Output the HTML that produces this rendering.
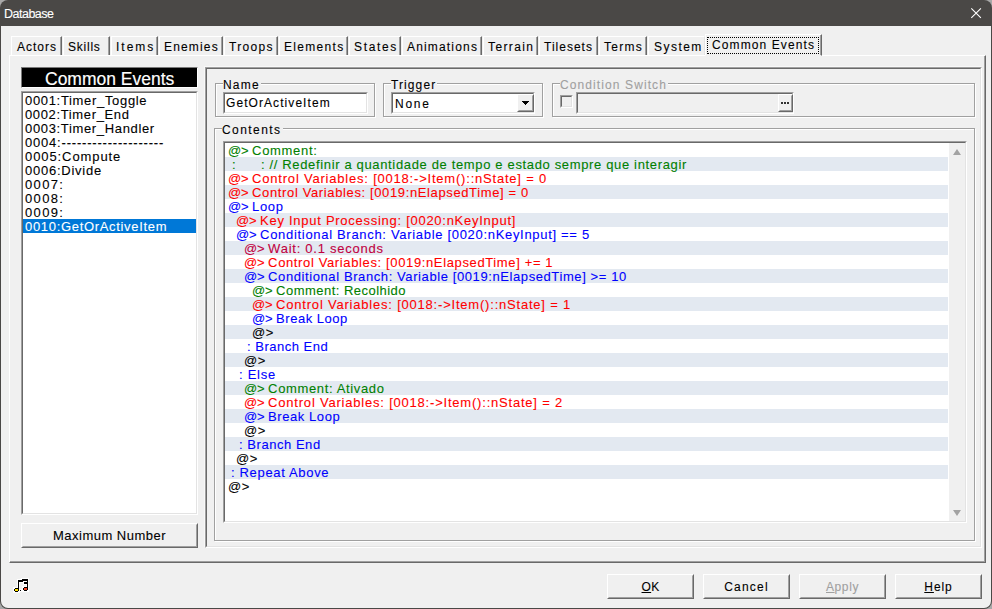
<!DOCTYPE html>
<html><head><meta charset="utf-8">
<style>
*{margin:0;padding:0;box-sizing:border-box}
html,body{width:992px;height:609px;overflow:hidden;background:#a8a8a8}
body{position:relative;font-family:"Liberation Sans",sans-serif;font-size:12px;color:#000;-webkit-text-stroke:0.1px currentColor}
.a{position:absolute}
.t{position:absolute;white-space:pre;line-height:14px;letter-spacing:0.8px}
/* etched group box */
.grp{position:absolute;border:1px solid #a0a0a0;box-shadow:1px 1px 0 #fff, inset 1px 1px 0 #fff}
/* sunken client edge */
.sunk{position:absolute;border-top:1px solid #a0a0a0;border-left:1px solid #a0a0a0;border-right:1px solid #fff;border-bottom:1px solid #fff}
.sunk>.in{position:absolute;left:0;top:0;right:0;bottom:0;border-top:1px solid #696969;border-left:1px solid #696969;border-right:1px solid #e3e3e3;border-bottom:1px solid #e3e3e3}
.btn{position:absolute;background:#f0f0f0;border-top:1px solid #fff;border-left:1px solid #fff;border-right:1px solid #696969;border-bottom:1px solid #696969}
.btn>.in{position:absolute;left:0;top:0;right:0;bottom:0;border-right:1px solid #a0a0a0;border-bottom:1px solid #a0a0a0;border-top:1px solid #f0f0f0;border-left:1px solid #f0f0f0}
.btn .lbl{position:absolute;left:0;right:0;text-align:center;white-space:pre}
.tab{position:absolute;top:36px;height:19px;border-top:1px solid #fff;border-left:1px solid #fff;border-right:1px solid #696969;background:#f0f0f0}
.tab:after{content:"";position:absolute;right:0;top:0;bottom:0;width:1px;background:#a0a0a0}
.tab.nt:after{display:none}
.tab span{position:absolute;top:3px;white-space:pre;letter-spacing:1.2px}
.ct{letter-spacing:0.65px;font-size:13px}
.at{letter-spacing:-0.1px}
.lt{font-size:13px}
.row{position:absolute;left:0;width:723px;height:14px}
.row.b{background:#e3e9f1}
.g{color:#008000}.r{color:#ff0000}.bl{color:#0000ff}.dr{color:#c00040}.k{color:#000}
</style></head><body>
<!-- title bar -->
<div class="a" style="left:0;top:0;width:992px;height:609px;background:#4a4846;border-radius:8px"></div>
<div class="a" style="left:1px;top:26px;width:990px;height:582px;background:#f0f0f0;border-radius:0 0 7px 7px"></div>
<div class="t" style="left:4px;top:7px;color:#fff;font-size:12.5px;letter-spacing:-0.5px">Database</div>
<div class="a" style="left:970px;top:7px;width:13px;height:13px">
<svg width="13" height="13" viewBox="0 0 13 13"><path d="M1.3 1.3L10.9 10.9M10.9 1.3L1.3 10.9" stroke="#fff" stroke-width="1.1"/></svg></div>

<!-- tab panel -->
<div class="a" style="left:9px;top:55px;width:977px;height:508px;border-top:1px solid #fff;border-left:1px solid #fff;border-right:1px solid #696969;border-bottom:1px solid #696969"></div>
<div class="a" style="left:984px;top:56px;width:1px;height:506px;background:#a0a0a0"></div>
<div class="a" style="left:10px;top:561px;width:975px;height:1px;background:#a0a0a0"></div>

<!-- tabs -->
<div class="tab" style="left:11px;width:51px"><span style="left:5px;letter-spacing:1.00px">Actors</span></div>
<div class="tab" style="left:63px;width:47px"><span style="left:4px;letter-spacing:0.76px">Skills</span></div>
<div class="tab" style="left:111px;width:47px"><span style="left:4px;letter-spacing:2.00px">Items</span></div>
<div class="tab" style="left:159px;width:64px"><span style="left:4px;letter-spacing:1.17px">Enemies</span></div>
<div class="tab" style="left:224px;width:54px"><span style="left:4px;letter-spacing:1.34px">Troops</span></div>
<div class="tab" style="left:279px;width:69px"><span style="left:4px;letter-spacing:1.31px">Elements</span></div>
<div class="tab" style="left:349px;width:52px"><span style="left:4px;letter-spacing:1.66px">States</span></div>
<div class="tab" style="left:402px;width:80px"><span style="left:4px;letter-spacing:1.17px">Animations</span></div>
<div class="tab" style="left:483px;width:55px"><span style="left:4px;letter-spacing:1.38px">Terrain</span></div>
<div class="tab" style="left:539px;width:59px"><span style="left:4px;letter-spacing:1.01px">Tilesets</span></div>
<div class="tab" style="left:599px;width:48px"><span style="left:4px;letter-spacing:1.28px">Terms</span></div>
<div class="tab nt" style="left:648px;width:57px;border-right:1px solid #e3e3e3"><span style="left:5px;letter-spacing:1.46px">System</span></div>
<div class="tab" style="left:705px;top:34px;width:117px;height:22px;z-index:2;border-bottom:1px solid #f0f0f0"><span style="left:6px;top:3px;letter-spacing:1.1px">Common Events</span>
<div class="a" style="left:1px;top:2px;width:112px;height:17px;border:1px dotted #000"></div></div>
<!-- left panel -->
<div class="a" style="left:21px;top:67px;width:177px;height:21px;background:#000;border-top:1px solid #7a7a7a;border-left:1px solid #7a7a7a;border-right:1px solid #fff;border-bottom:1px solid #fff"></div>
<div class="t" style="left:45px;top:70px;color:#fff;font-size:17.5px;line-height:18px;letter-spacing:0px;-webkit-text-stroke:0.15px #fff">Common Events</div>
<div class="sunk" style="left:21px;top:91px;width:177px;height:424px;background:#fff"><div class="in"></div></div>
<div class="a" style="left:23px;top:219px;width:173px;height:14px;background:#0078d7"></div>
<div class="t lt" style="left:25px;top:94px;letter-spacing:0.675px">0001:Timer_Toggle</div>
<div class="t lt" style="left:25px;top:108px;letter-spacing:0.642px">0002:Timer_End</div>
<div class="t lt" style="left:25px;top:122px;letter-spacing:0.656px">0003:Timer_Handler</div>
<div class="t lt" style="left:25px;top:136px;letter-spacing:0.800px">0004:--------------------</div>
<div class="t lt" style="left:25px;top:150px;letter-spacing:0.914px">0005:Compute</div>
<div class="t lt" style="left:25px;top:164px;letter-spacing:0.750px">0006:Divide</div>
<div class="t lt" style="left:25px;top:178px;letter-spacing:1.350px">0007:</div>
<div class="t lt" style="left:25px;top:192px;letter-spacing:1.350px">0008:</div>
<div class="t lt" style="left:25px;top:206px;letter-spacing:1.350px">0009:</div>
<div class="t lt" style="left:25px;top:220px;letter-spacing:0.680px;color:#fff">0010:GetOrActiveItem</div>
<div class="btn" style="left:21px;top:523px;width:177px;height:25px"><div class="in"></div><div class="lbl" style="top:4px;font-size:13px;letter-spacing:0.48px">Maximum Number</div></div>

<!-- right panel -->
<div class="a" style="left:204px;top:66px;width:777px;height:481px;border-top:1px solid #f8f8f8;border-left:1px solid #f8f8f8"></div>
<div class="sunk" style="left:205px;top:67px;width:777px;height:481px"><div class="in"></div></div>

<!-- Name group -->
<div class="grp" style="left:215px;top:83px;width:160px;height:34px"></div>
<div class="t" style="left:223px;top:78px;background:#f0f0f0;padding:0 1px 0 0;letter-spacing:1.2px">Name</div>
<div class="sunk" style="left:223px;top:92px;width:145px;height:22px;background:#fff"><div class="in"></div></div>
<div class="t" style="left:226px;top:96px;letter-spacing:1.07px">GetOrActiveItem</div>

<!-- Trigger group -->
<div class="grp" style="left:383px;top:83px;width:160px;height:34px"></div>
<div class="t" style="left:391px;top:78px;background:#f0f0f0;padding:0 1px 0 0;letter-spacing:1.1px">Trigger</div>
<div class="sunk" style="left:391px;top:92px;width:144px;height:22px;background:#fff"><div class="in"></div></div>
<div class="t" style="left:395px;top:97px;letter-spacing:1.75px">None</div>
<div class="btn" style="left:517px;top:94px;width:17px;height:18px"><div class="in"></div></div>
<svg class="a" style="left:522px;top:101px" width="7" height="4" shape-rendering="crispEdges"><rect x="0" y="0" width="7" height="1"/><rect x="1" y="1" width="5" height="1"/><rect x="2" y="2" width="3" height="1"/><rect x="3" y="3" width="1" height="1"/></svg>

<!-- Condition switch group -->
<div class="grp" style="left:552px;top:83px;width:423px;height:34px"></div>
<div class="t" style="left:560px;top:78px;background:#f0f0f0;padding:0 1px 0 0;color:#a0a0a0;letter-spacing:1.1px">Condition Switch</div>
<div class="a" style="left:560px;top:95px;width:13px;height:13px;border-top:1px solid #a0a0a0;border-left:1px solid #a0a0a0;border-right:1px solid #fff;border-bottom:1px solid #fff"><div class="a" style="left:0;top:0;right:0;bottom:0;border-top:1px solid #696969;border-left:1px solid #696969;border-right:1px solid #e3e3e3;border-bottom:1px solid #e3e3e3"></div></div>
<div class="sunk" style="left:576px;top:92px;width:218px;height:22px;background:#f0f0f0"><div class="in"></div></div>
<div class="btn" style="left:778px;top:94px;width:15px;height:18px"><div class="in"></div></div>
<div class="a" style="left:781px;top:102px;width:2px;height:2px;background:#333"></div>
<div class="a" style="left:784px;top:102px;width:2px;height:2px;background:#333"></div>
<div class="a" style="left:787px;top:102px;width:2px;height:2px;background:#333"></div>

<!-- Contents group -->
<div class="grp" style="left:214px;top:128px;width:761px;height:413px"></div>
<div class="t" style="left:222px;top:123px;background:#f0f0f0;padding:0 1px 0 0;letter-spacing:1.44px">Contents</div>
<div class="sunk" style="left:223px;top:141px;width:744px;height:382px;background:#fff"><div class="in"></div></div>
<div class="a" style="left:225px;top:143px;width:740px;height:378px;overflow:hidden">
<div class="row" style="top:0"></div>
<div class="row b" style="top:14px"></div>
<div class="row" style="top:28px"></div>
<div class="row b" style="top:42px"></div>
<div class="row" style="top:56px"></div>
<div class="row b" style="top:70px"></div>
<div class="row" style="top:84px"></div>
<div class="row b" style="top:98px"></div>
<div class="row" style="top:112px"></div>
<div class="row b" style="top:126px"></div>
<div class="row" style="top:140px"></div>
<div class="row b" style="top:154px"></div>
<div class="row" style="top:168px"></div>
<div class="row b" style="top:182px"></div>
<div class="row" style="top:196px"></div>
<div class="row b" style="top:210px"></div>
<div class="row" style="top:224px"></div>
<div class="row b" style="top:238px"></div>
<div class="row" style="top:252px"></div>
<div class="row b" style="top:266px"></div>
<div class="row" style="top:280px"></div>
<div class="row b" style="top:294px"></div>
<div class="row" style="top:308px"></div>
<div class="row b" style="top:322px"></div>
<div class="row" style="top:336px"></div>
<!-- scrollbar -->
<div class="a" style="left:724px;top:0;width:17px;height:378px;background:#f0f0f0"></div>
<div class="a" style="left:728px;top:6px;width:0;height:0;border-left:4px solid transparent;border-right:4px solid transparent;border-bottom:6px solid #a3a3a3"></div>
<div class="a" style="left:728px;top:367px;width:0;height:0;border-left:4px solid transparent;border-right:4px solid transparent;border-top:6px solid #a3a3a3"></div>
</div>
<!--ROWS-->
<div class="t ct g" style="left:228px;top:144px;letter-spacing:0.679px"><span class="at">@&gt; </span>Comment:</div>
<div class="t ct g" style="left:232px;top:158px">:</div>
<div class="t ct r" style="left:228px;top:172px;letter-spacing:0.792px"><span class="at">@&gt; </span>Control Variables: [0018:-&gt;Item()::nState] = 0</div>
<div class="t ct r" style="left:228px;top:186px;letter-spacing:0.626px"><span class="at">@&gt; </span>Control Variables: [0019:nElapsedTime] = 0</div>
<div class="t ct bl" style="left:228px;top:200px;letter-spacing:0.650px"><span class="at">@&gt; </span>Loop</div>
<div class="t ct r" style="left:236px;top:214px;letter-spacing:0.726px"><span class="at">@&gt; </span>Key Input Processing: [0020:nKeyInput]</div>
<div class="t ct bl" style="left:236px;top:228px;letter-spacing:0.687px"><span class="at">@&gt; </span>Conditional Branch: Variable [0020:nKeyInput] == 5</div>
<div class="t ct dr" style="left:244px;top:242px;letter-spacing:0.750px"><span class="at">@&gt; </span>Wait: 0.1 seconds</div>
<div class="t ct r" style="left:244px;top:256px;letter-spacing:0.631px"><span class="at">@&gt; </span>Control Variables: [0019:nElapsedTime] += 1</div>
<div class="t ct bl" style="left:244px;top:270px;letter-spacing:0.593px"><span class="at">@&gt; </span>Conditional Branch: Variable [0019:nElapsedTime] &gt;= 10</div>
<div class="t ct g" style="left:252px;top:284px;letter-spacing:0.474px"><span class="at">@&gt; </span>Comment: Recolhido</div>
<div class="t ct r" style="left:252px;top:298px;letter-spacing:0.792px"><span class="at">@&gt; </span>Control Variables: [0018:-&gt;Item()::nState] = 1</div>
<div class="t ct bl" style="left:252px;top:312px;letter-spacing:0.517px"><span class="at">@&gt; </span>Break Loop</div>
<div class="t ct k" style="left:252px;top:326px">@&gt;</div>
<div class="t ct bl" style="left:247px;top:340px;letter-spacing:0.505px">: Branch End</div>
<div class="t ct k" style="left:244px;top:354px">@&gt;</div>
<div class="t ct bl" style="left:239px;top:368px;letter-spacing:0.730px">: Else</div>
<div class="t ct g" style="left:244px;top:382px;letter-spacing:0.637px"><span class="at">@&gt; </span>Comment: Ativado</div>
<div class="t ct r" style="left:244px;top:396px;letter-spacing:0.792px"><span class="at">@&gt; </span>Control Variables: [0018:-&gt;Item()::nState] = 2</div>
<div class="t ct bl" style="left:244px;top:410px;letter-spacing:0.561px"><span class="at">@&gt; </span>Break Loop</div>
<div class="t ct k" style="left:244px;top:424px">@&gt;</div>
<div class="t ct bl" style="left:239px;top:438px;letter-spacing:0.541px">: Branch End</div>
<div class="t ct k" style="left:236px;top:452px">@&gt;</div>
<div class="t ct bl" style="left:231px;top:466px;letter-spacing:0.665px">: Repeat Above</div>
<div class="t ct k" style="left:228px;top:480px">@&gt;</div>
<div class="t ct g" style="left:261px;top:158px">: // Redefinir a quantidade de tempo e estado sempre que interagir</div>

<!--/ROWS-->

<!-- music icon -->
<svg class="a" style="left:13px;top:577px" width="17" height="16" viewBox="0 0 17 16" shape-rendering="crispEdges">
<g fill="#fff"><rect x="4" y="2" width="6" height="4"/><rect x="8" y="1" width="8" height="4"/><rect x="4" y="2" width="3" height="12"/><rect x="13" y="1" width="3" height="13"/><rect x="10" y="4" width="6" height="4"/><rect x="0" y="10" width="7" height="6"/><rect x="9" y="9" width="7" height="6"/><rect x="6" y="12" width="3" height="3"/></g>
<g fill="#000"><rect x="5" y="3" width="5" height="2"/><rect x="9" y="2" width="6" height="2"/><rect x="5" y="3" width="1" height="10"/><rect x="14" y="2" width="1" height="11"/><rect x="11" y="5" width="4" height="2"/>
<rect x="2" y="11" width="3" height="4"/><rect x="1" y="12" width="5" height="2"/>
<rect x="11" y="10" width="3" height="4"/><rect x="10" y="11" width="5" height="2"/>
<rect x="7" y="13" width="1" height="1"/></g>
<rect x="2" y="12" width="3" height="2" fill="#ffe000"/>
<rect x="11" y="11" width="3" height="2" fill="#f04020"/>
</svg>
<!-- bottom -->
<div class="btn" style="left:607px;top:574px;width:87px;height:25px"><div class="in"></div><div class="lbl" style="top:5px;letter-spacing:0.3px"><u>O</u>K</div></div>
<div class="btn" style="left:703px;top:574px;width:87px;height:25px"><div class="in"></div><div class="lbl" style="top:5px;letter-spacing:1.2px">Cancel</div></div>
<div class="btn" style="left:799px;top:574px;width:87px;height:25px"><div class="in"></div><div class="lbl" style="top:5px;letter-spacing:0.6px;color:#a0a0a0"><u>A</u>pply</div></div>
<div class="btn" style="left:895px;top:574px;width:87px;height:25px"><div class="in"></div><div class="lbl" style="top:5px;letter-spacing:0.93px"><u>H</u>elp</div></div>

</body></html>
